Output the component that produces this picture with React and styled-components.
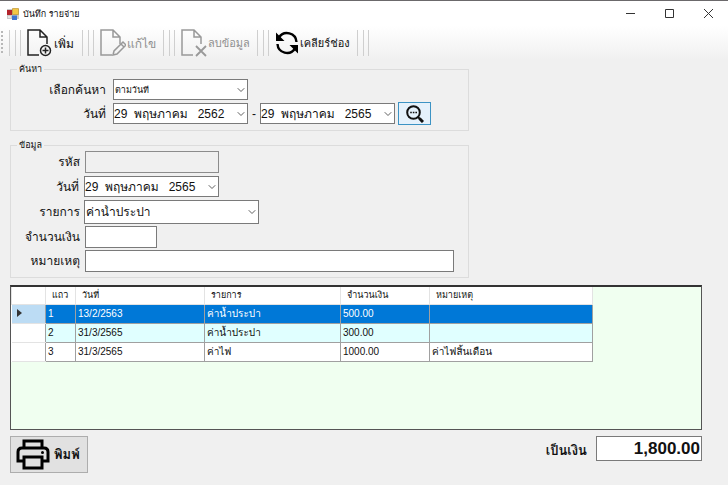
import React from "react";
import styled, { createGlobalStyle } from "styled-components";
import { ChevronDown } from "lucide-react";

const GlobalStyle = createGlobalStyle`
  * {
    box-sizing: border-box;
  }

  body {
    margin: 0;
    background: #f0f0f0;
    color: #111;
    font-family: "Liberation Sans", "Loma", "Waree", "Garuda", sans-serif;
    font-size: 12px;
  }

  button,
  input,
  select {
    font: inherit;
    color: inherit;
    border-radius: 0;
  }
`;

const Window = styled.div`
  min-height: 100vh;
  border-top: 1px solid #6b696b;
`;

const TitleBar = styled.header`
  display: flex;
  align-items: center;
  height: 25px;
  padding-left: 7px;
  background: #fff;
`;

const Title = styled.h1`
  flex: 1;
  margin: 0 0 0 4px;
  font-size: 9px;
  font-weight: normal;
`;

const WindowButton = styled.button`
  display: flex;
  align-items: center;
  justify-content: center;
  width: 39px;
  height: 24px;
  padding: 0;
  border: 0;
  background: none;
`;

const ToolBar = styled.nav`
  display: flex;
  align-items: center;
  height: 34px;
  padding-left: 1px;
  background: linear-gradient(#fff, #f0f0f0);
`;

const Grip = styled.span`
  width: 2px;
  height: 24px;
  margin-right: 6px;
  background: repeating-linear-gradient(#b8b8b8 0 2px, transparent 2px 4px);
`;

const Separator = styled.span`
  width: 12px;
  height: 26px;
  border: solid #cfcfcf;
  border-width: 0 1px;
  background: linear-gradient(#cfcfcf, #cfcfcf) center / 1px 100% no-repeat;
`;

const ToolButton = styled.button`
  display: flex;
  align-items: center;
  gap: 1px;
  width: ${props => props.$width};
  height: 30px;
  padding: 0 0 0 6px;
  border: 0;
  background: none;
  font-size: ${props => props.$size || "12px"};
  white-space: nowrap;

  &:disabled {
    color: #8f8f8f;
  }
`;

const Main = styled.main`
  padding: 3px 26px 10px 10px;
`;

const Group = styled.fieldset`
  max-width: 459px;
  margin: 0 0 ${props => props.$after};
  padding: 0 0 5px;
  border: 1px solid #dcdcdc;
`;

const Legend = styled.legend`
  height: 12px;
  margin-left: 6px;
  padding: 0 2px;
  font-size: 9px;
  line-height: 12px;
`;

const Field = styled.div`
  display: grid;
  grid-template-columns: ${props => props.$label} 1fr;
  column-gap: ${props => props.$gap};
  align-items: center;
  margin-top: ${props => props.$top || "2px"};
`;

const Label = styled.label`
  font-size: 12px;
  line-height: 16px;
  text-align: right;
  white-space: nowrap;
`;

const Controls = styled.div`
  display: flex;
  align-items: center;
`;

const Dash = styled.span`
  width: 12px;
  text-align: center;
`;

const TextBox = styled.input`
  width: ${props => props.$width};
  max-width: 100%;
  height: 22px;
  padding: 0 2px;
  border: 1px solid #7a7a7a;
  background: #fff;

  &:disabled {
    border-color: #8c8c8c;
    background: #f0f0f0;
  }
`;

const DropBox = styled.span`
  position: relative;
  display: block;
  width: ${props => props.$width};

  svg {
    position: absolute;
    top: 50%;
    right: 1px;
    transform: translateY(-50%);
    pointer-events: none;
  }
`;

const Select = styled.select`
  appearance: none;
  display: block;
  width: 100%;
  height: ${props => props.$height};
  padding: 0 16px 0 1px;
  border: 1px solid #7a7a7a;
  background: #fff;
  font-size: ${props => props.$size};
`;

const DateText = styled.input`
  display: block;
  width: 100%;
  height: 21px;
  padding: 0 14px 0 0;
  border: 1px solid #7a7a7a;
  background: #fff;
`;

const SearchButton = styled.button`
  display: flex;
  align-items: center;
  justify-content: center;
  width: 33px;
  height: 23px;
  margin-left: 3px;
  padding: 0;
  border: 1px solid #3c93c4;
  background: #e5f1fb;
`;

const GridPanel = styled.section`
  height: 145px;
  overflow: hidden;
  border: 1px solid #555;
  border-top: 2px solid #333;
  background: #f0fff0;
`;

const Table = styled.table`
  width: 581px;
  border-collapse: collapse;
  table-layout: fixed;
  background: #fff;
  font-size: 10px;

  th,
  td {
    padding: 0 0 0 2px;
    text-align: left;
    white-space: nowrap;
    overflow: hidden;
  }

  thead th {
    height: 17px;
    padding-left: 6px;
    border: 1px solid #e3e3e3;
    border-top: 0;
    font-size: 9px;
    font-weight: normal;
  }

  tbody th {
    height: 19px;
    padding-left: 5px;
    border-bottom: 1px solid #e3e3e3;
  }

  td {
    border: 1px solid #a0a0a0;
  }
`;

const Row = styled.tr`
  background: ${props => props.$color};
  color: ${props => (props.$selected ? "#fff" : "#111")};

  th {
    background: ${props => (props.$selected ? "#bcdcf4" : "#fff")};
  }
`;

const Footer = styled.footer`
  display: flex;
  align-items: flex-start;
  justify-content: space-between;
  margin-top: 6px;
`;

const PrintButton = styled.button`
  display: flex;
  align-items: center;
  gap: 4px;
  width: 78px;
  height: 37px;
  padding: 0 5px;
  border: 1px solid #adadad;
  background: #e1e1e1;
  font-size: 13px;
  font-weight: bold;
`;

const Total = styled.div`
  display: flex;
  align-items: flex-end;
  gap: 9px;
  font-size: 13px;
  font-weight: bold;
`;

const TotalBox = styled.input`
  width: 106px;
  height: 25px;
  padding: 0 1px;
  border: 1px solid #7a7a7a;
  background: #fff;
  font-size: 17px;
  font-weight: bold;
  text-align: right;
`;

const FileIcon = ({ color, children }) => (
  <svg width="26" height="30" viewBox="0 0 26 30" fill="none" stroke={color} strokeWidth="1.500">
    <path d="M12 27H1V2h12l7 7v7M13 2v7h7" />
    {children}
  </svg>
);

const Arrow = () => <ChevronDown size={12} strokeWidth={2} color="#606060" />;

const DatePicker = ({ id, label, value }) => (
  <DropBox $width="135px">
    <DateText id={id} aria-label={label} defaultValue={value} />
    <Arrow />
  </DropBox>
);

const rows = [
  { no: 1, date: "13/2/2563", item: "ค่าน้ำประปา", amount: "500.00", note: "", color: "#0078d7" },
  { no: 2, date: "31/3/2565", item: "ค่าน้ำประปา", amount: "300.00", note: "", color: "#e0ffff" },
  { no: 3, date: "31/3/2565", item: "ค่าไฟ", amount: "1000.00", note: "ค่าไฟสิ้นเดือน", color: "#fff" }
];

const App = () => (
  <Window>
    <GlobalStyle />
    <TitleBar>
      <svg width="12" height="12" viewBox="0 0 12 12">
        <path fill="#c8c8c8" d="M0 1h12v10H0z" />
        <path fill="#b3232b" d="M0 2h5v5H0z" />
        <path fill="#f3c544" stroke="#b58b24" strokeWidth=".6" d="M5.5.5h6v6h-6z" />
        <path fill="#3e74cf" d="M5 7.500h5V12H5z" />
        <path fill="#e4e4e4" d="M1 8h3v2H1z" />
      </svg>
      <Title>บันทึก รายจ่าย</Title>
      <WindowButton aria-label="Minimize">
        <svg width="9" height="9" stroke="#333">
          <path d="M0 4.500h9" />
        </svg>
      </WindowButton>
      <WindowButton aria-label="Maximize">
        <svg width="9" height="9" stroke="#333" fill="none">
          <path d="M.5.5h8v8h-8z" />
        </svg>
      </WindowButton>
      <WindowButton aria-label="Close">
        <svg width="9" height="9" stroke="#333">
          <path d="M0 0l9 9M9 0L0 9" />
        </svg>
      </WindowButton>
    </TitleBar>

    <ToolBar>
      <Grip />
      <Separator />
      <ToolButton $width="61px">
        <FileIcon color="#222">
          <circle cx="18.500" cy="22.500" r="5" />
          <path d="M18.500 19.500v6M15.500 22.500h6" />
        </FileIcon>
        เพิ่ม
      </ToolButton>
      <Separator />
      <ToolButton $width="69px" disabled>
        <FileIcon color="#999">
          <path d="M13 27l1-4 9-9 3 3-9 9zM21 16l3 3" />
        </FileIcon>
        แก้ไข
      </ToolButton>
      <Separator />
      <ToolButton $width="82px" $size="11px" disabled>
        <FileIcon color="#999">
          <path strokeWidth="1.800" d="M15 18l10 10M25 18L15 28" />
        </FileIcon>
        ลบข้อมูล
      </ToolButton>
      <Separator />
      <ToolButton $width="88px" $size="11px">
        <svg width="24" height="24" viewBox="0 0 24 24" fill="none" stroke="#000" strokeWidth="2.400">
          <path d="M4 6.500A9.500 9.500 0 0 1 21.500 11M20 17.500A9.500 9.500 0 0 1 2.500 13" />
          <path fill="#000" stroke="none" d="M1 1.500v8.500H9.500zM23 22.500v-8.500H14.500z" />
        </svg>
        เคลียร์ช่อง
      </ToolButton>
      <Separator />
    </ToolBar>

    <Main>
      <Group $after="8px">
        <Legend>ค้นหา</Legend>
        <Field $label="95px" $gap="7px" $top="4px">
          <Label htmlFor="search-by">เลือกค้นหา</Label>
          <DropBox $width="135px">
            <Select id="search-by" $height="21px" $size="9px">
              <option>ตามวันที่</option>
            </Select>
            <Arrow />
          </DropBox>
        </Field>
        <Field $label="95px" $gap="7px">
          <Label htmlFor="date-from">วันที่</Label>
          <Controls>
            <DatePicker id="date-from" value="29  พฤษภาคม   2562" />
            <Dash>-</Dash>
            <DatePicker label="ถึงวันที่" value="29  พฤษภาคม   2565" />
            <SearchButton aria-label="ค้นหา">
              <svg width="18" height="18" viewBox="0 0 18 18" fill="none" stroke="#111" strokeWidth="2">
                <circle cx="7.500" cy="7.500" r="6.300" />
                <path d="M12 12l2 2" />
                <path strokeWidth="3" d="M13.500 13.500L17 17" />
                <path strokeWidth="1.600" strokeDasharray="1.600 1" d="M4.200 7.500h7" />
              </svg>
            </SearchButton>
          </Controls>
        </Field>
      </Group>

      <Group $after="7px">
        <Legend>ข้อมูล</Legend>
        <Field $label="69px" $gap="5px" $top="0px">
          <Label htmlFor="code">รหัส</Label>
          <TextBox id="code" $width="134px" disabled />
        </Field>
        <Field $label="68px" $gap="5px" $top="3px">
          <Label htmlFor="date">วันที่</Label>
          <DatePicker id="date" value="29  พฤษภาคม   2565" />
        </Field>
        <Field $label="69px" $gap="4px" $top="3px">
          <Label htmlFor="item">รายการ</Label>
          <DropBox $width="175px">
            <Select id="item" $height="24px" $size="12px">
              <option>ค่าน้ำประปา</option>
            </Select>
            <Arrow />
          </DropBox>
        </Field>
        <Field $label="69px" $gap="5px">
          <Label htmlFor="amount">จำนวนเงิน</Label>
          <TextBox id="amount" $width="72px" />
        </Field>
        <Field $label="69px" $gap="5px">
          <Label htmlFor="note">หมายเหตุ</Label>
          <TextBox id="note" $width="369px" />
        </Field>
      </Group>

      <GridPanel>
        <Table>
          <colgroup>
            <col width="34" />
            <col width="30" />
            <col width="129" />
            <col width="136" />
            <col width="89" />
            <col width="163" />
          </colgroup>
          <thead>
            <tr>
              <th />
              <th>แถว</th>
              <th>วันที่</th>
              <th>รายการ</th>
              <th>จำนวนเงิน</th>
              <th>หมายเหตุ</th>
            </tr>
          </thead>
          <tbody>
            {rows.map((row, i) => (
              <Row key={row.no} $color={row.color} $selected={i === 0}>
                <th>
                  {i === 0 && (
                    <svg width="5" height="8" viewBox="0 0 5 8">
                      <path fill="#333" d="M0 0l5 4-5 4z" />
                    </svg>
                  )}
                </th>
                <td>{row.no}</td>
                <td>{row.date}</td>
                <td>{row.item}</td>
                <td>{row.amount}</td>
                <td>{row.note}</td>
              </Row>
            ))}
          </tbody>
        </Table>
      </GridPanel>

      <Footer>
        <PrintButton>
          <svg width="34" height="31" viewBox="0 0 34 31" fill="none" stroke="#000" strokeWidth="3">
            <path d="M8 10V2h18v8M8 22H2V13q0-4 4-4h22q4 0 4 4v9h-6" />
            <path d="M8 18h18v11H8z" />
            <circle cx="26.500" cy="13.500" r="1.500" fill="#000" stroke="none" />
          </svg>
          พิมพ์
        </PrintButton>
        <Total>
          <label htmlFor="total">เป็นเงิน</label>
          <TotalBox id="total" defaultValue="1,800.00" />
        </Total>
      </Footer>
    </Main>
  </Window>
);

export default App;
